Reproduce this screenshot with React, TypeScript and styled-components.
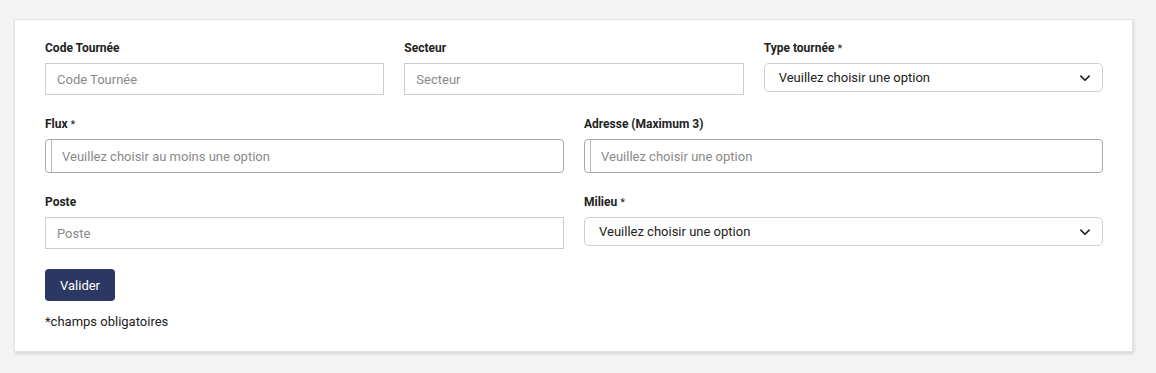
import React from "react";
import styled, { createGlobalStyle } from "styled-components";

const Global = createGlobalStyle`
  html, body { margin: 0; padding: 0; background: #f3f3f3; }
  body { font-family: Roboto, "Noto Sans", Arial, sans-serif; color: #212529; }
  * { box-sizing: border-box; }
`;

const Page = styled.div`
  padding: 19px 23px 22px 14px;
`;

const Card = styled.form`
  background: #fff;
  border: 1px solid #e2e2e2;
  box-shadow: 1px 2px 3px rgba(0, 0, 0, 0.12);
  padding: 20px 29px 21px 30px;
  display: flex;
  flex-direction: column;
`;

const Row = styled.div<{ $cols: number }>`
  display: grid;
  grid-template-columns: repeat(${(p) => p.$cols}, 1fr);
  column-gap: 20px;
  margin-bottom: 21px;
`;

const Field = styled.div`
  display: flex;
  flex-direction: column;
  min-width: 0;
`;

const Label = styled.label`
  font-size: 12px;
  font-weight: 700;
  line-height: 16px;
  height: 16px;
  color: #222;
  margin-bottom: 7px;
`;

const Star = styled.span`
  font-weight: 400;
  font-size: 11px;
  line-height: 0;
  margin-left: 3px;
`;

const TextInput = styled.input`
  height: 32px;
  border: 1px solid #ccc;
  border-radius: 0;
  padding: 0 11px;
  font-family: inherit;
  font-size: 13px;
  color: #333;
  outline: none;
  &::placeholder { color: #8a8a8a; }
`;

const SelectBox = styled.div`
  height: 29px;
  border: 1px solid #cfcfcf;
  border-radius: 5px;
  display: flex;
  align-items: center;
  justify-content: space-between;
  padding: 0 11px 0 14px;
  font-size: 13px;
  color: #212121;
`;

const Multi = styled.div`
  height: 34px;
  border: 1px solid #a9a9a9;
  border-radius: 4px;
  display: flex;
  align-items: stretch;
  overflow: hidden;
`;

const MultiTab = styled.div`
  width: 6px;
  border-right: 1px solid #b8b8b8;
`;

const MultiPlaceholder = styled.div`
  display: flex;
  align-items: center;
  padding-left: 10px;
  font-size: 13px;
  color: #8a8a8a;
`;

const Button = styled.button`
  align-self: flex-start;
  height: 32px;
  padding: 0 15px;
  border: none;
  border-radius: 4px;
  background: #2c3864;
  color: #fff;
  font-family: inherit;
  font-size: 13px;
  font-weight: 400;
  margin-top: -1px;
  margin-bottom: 12px;
`;

const Note = styled.div`
  font-size: 13px;
  line-height: 17px;
  color: #222;
`;

const Chevron = () => (
  <svg width="12" height="12" viewBox="0 0 16 16" fill="none">
    <path d="M2.5 5.5 8 11l5.5-5.5" stroke="#222" strokeWidth="2.2" strokeLinecap="round" strokeLinejoin="round" />
  </svg>
);

const Select = ({ text }: { text: string }) => (
  <SelectBox>
    <span>{text}</span>
    <Chevron />
  </SelectBox>
);

const MultiSelect = ({ text }: { text: string }) => (
  <Multi>
    <MultiTab />
    <MultiPlaceholder>{text}</MultiPlaceholder>
  </Multi>
);

export default function App() {
  return (
    <>
      <Global />
      <Page>
        <Card onSubmit={(e) => e.preventDefault()}>
          <Row $cols={3}>
            <Field>
              <Label>Code Tournée</Label>
              <TextInput placeholder="Code Tournée" />
            </Field>
            <Field>
              <Label>Secteur</Label>
              <TextInput placeholder="Secteur" />
            </Field>
            <Field>
              <Label>
                Type tournée<Star>*</Star>
              </Label>
              <Select text="Veuillez choisir une option" />
            </Field>
          </Row>
          <Row $cols={2}>
            <Field>
              <Label>
                Flux<Star>*</Star>
              </Label>
              <MultiSelect text="Veuillez choisir au moins une option" />
            </Field>
            <Field>
              <Label>Adresse (Maximum 3)</Label>
              <MultiSelect text="Veuillez choisir une option" />
            </Field>
          </Row>
          <Row $cols={2}>
            <Field>
              <Label>Poste</Label>
              <TextInput placeholder="Poste" />
            </Field>
            <Field>
              <Label>
                Milieu<Star>*</Star>
              </Label>
              <Select text="Veuillez choisir une option" />
            </Field>
          </Row>
          <Button type="submit">Valider</Button>
          <Note>*champs obligatoires</Note>
        </Card>
      </Page>
    </>
  );
}
